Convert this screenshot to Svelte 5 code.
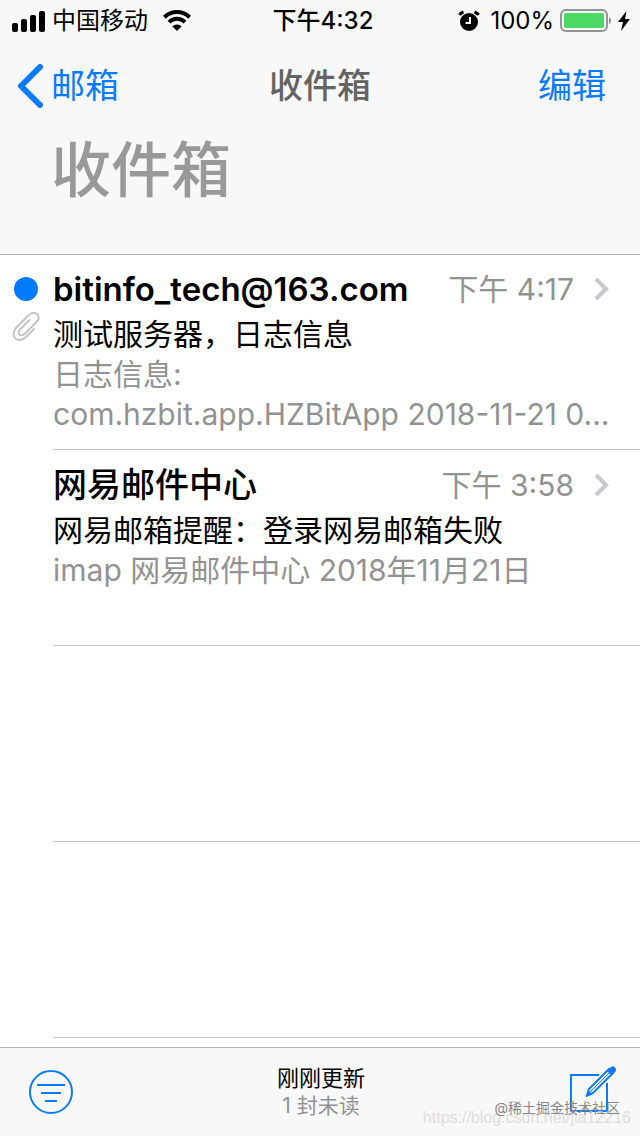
<script lang="ts">
	type Mail = {
		sender: string;
		time: string;
		subject: string;
		preview: string[];
		unread?: boolean;
		attachment?: boolean;
	};

	const mails: Mail[] = [
		{
			sender: 'bitinfo_tech@163.com',
			time: '下午 4:17',
			subject: '测试服务器，日志信息',
			preview: ['日志信息:', 'com.hzbit.app.HZBitApp 2018-11-21 0...'],
			unread: true,
			attachment: true
		},
		{
			sender: '网易邮件中心',
			time: '下午 3:58',
			subject: '网易邮箱提醒：登录网易邮箱失败',
			preview: ['imap 网易邮件中心 2018年11月21日']
		}
	];

	// empty slots below the last mail
	const emptyRows = 2;

	// plain addresses are set heavier than Chinese names
	const isAddress = (sender: string) => sender.includes('@');
</script>

<div class="screen">
	<header class="header">
		<div class="status">
			<div class="status-side">
				<svg class="signal" width="34" height="22" viewBox="0 0 34 22" aria-hidden="true">
					<rect x="0" y="13" width="6" height="9" rx="2" />
					<rect x="9" y="9" width="6" height="13" rx="2" />
					<rect x="18" y="5" width="6" height="17" rx="2" />
					<rect x="27" y="1" width="6" height="21" rx="2" />
				</svg>
				<span>中国移动</span>
				<svg class="wifi" width="30" height="22" viewBox="0 0 30 22" aria-hidden="true">
					<path d="M2.4 7.2a18 18 0 0 1 25.2 0" />
					<path d="M7 12.1a11.4 11.4 0 0 1 16 0" />
					<path class="dot" d="M10.3 16.3a6.8 6.8 0 0 1 9.4 0L15 21Z" />
				</svg>
			</div>
			<span class="clock">下午4:32</span>
			<div class="status-side end">
				<svg width="22" height="22" viewBox="0 0 22 22" aria-hidden="true">
					<circle cx="11" cy="12" r="9" />
					<path class="arc" d="M1.500 5Q2.500 3 5.500 2M20.500 5Q19.500 3 16.500 2" />
					<path class="hand" d="M12 7v6H7.500" />
				</svg>
				<span class="percent">100%</span>
				<svg width="52" height="24" viewBox="0 0 52 24" aria-hidden="true">
					<rect class="shell" x="1" y="1" width="46" height="21" rx="5" />
					<rect class="charge" x="4" y="4" width="40" height="15" rx="2" />
					<path class="cap" d="M49 8a4 4 0 0 1 0 7Z" />
				</svg>
				<svg width="12" height="20" viewBox="0 0 12 20" aria-hidden="true">
					<path d="M8.5 0 0 11h5L3 20l9-12H7Z" />
				</svg>
			</div>
		</div>

		<nav class="nav">
			<button class="nav-button" type="button">
				<svg width="26" height="44" viewBox="0 0 26 44" aria-hidden="true">
					<path d="M23 3 4 22l19 19" />
				</svg>
				<span>邮箱</span>
			</button>
			<span class="nav-title">收件箱</span>
			<button class="nav-button edit" type="button">编辑</button>
		</nav>

		<h1>收件箱</h1>
	</header>

	<main>
		<ul class="mails">
			{#each mails as mail}
				<li>
					<div class="marks">
						{#if mail.unread}
							<span class="unread" role="img" aria-label="未读"></span>
						{/if}
						{#if mail.attachment}
							<svg width="28" height="30" viewBox="0 0 28 30" aria-hidden="true">
								<path
									d="M22 18 14 26c-3 3-7.500 4-10.500 1.500s-2.500-7 .5-10.500L16.500 4.500c2.500-2.500 6-3.500 8.500-1.500s2 5.500-.5 8L13 22.500c-1.500 1.500-4 2.500-5.500 1s-1-3.500.5-5l9.500-9.500"
								/>
							</svg>
						{/if}
					</div>
					<a class="mail" href="#mail">
						<span class="top">
							<strong class:address={isAddress(mail.sender)}>{mail.sender}</strong>
							<time>{mail.time}</time>
							<svg width="16" height="24" viewBox="0 0 16 24" aria-hidden="true">
								<path d="m2 2 10 10L2 22" />
							</svg>
						</span>
						<span class="subject">{mail.subject}</span>
						{#each mail.preview as line}
							<span class="preview">{line}</span>
						{/each}
					</a>
				</li>
			{/each}
			{#each { length: emptyRows } as _}
				<li aria-hidden="true">
					<div class="marks"></div>
					<div class="mail"></div>
				</li>
			{/each}
		</ul>
	</main>

	<footer class="toolbar">
		<button type="button" aria-label="过滤">
			<svg width="46" height="46" viewBox="0 0 46 46" aria-hidden="true">
				<circle cx="23" cy="23" r="21" />
				<path d="M9 16h28M13 24h20M17 32h12" />
			</svg>
		</button>
		<p>
			<span>刚刚更新</span>
			<small>1 封未读</small>
		</p>
		<button type="button" aria-label="写邮件">
			<svg width="48" height="52" viewBox="0 0 48 52" aria-hidden="true">
				<path d="M31 9H3v36h36V17" />
				<path d="M19 29.500 21 23 41 3l4 4-20 20Z" />
				<path d="M22 26 41 7" stroke-width="1" />
				<path class="solid" d="m39 5 4-4q2-1.500 4 .5t.5 4l-4 4ZM18 31l2-7 4.500 4.500Z" />
			</svg>
		</button>
		<span class="watermark url">https://blog.csdn.net/jia12216</span>
		<span class="watermark">@稀土掘金技术社区</span>
	</footer>
</div>

<style>
	:global(body) {
		margin: 0;
	}

	.screen {
		display: flex;
		flex-direction: column;
		height: 100vh;
		overflow: hidden;
		background: #fff;
		color: #000;
		font-family: Inter, 'Noto Sans CJK SC', sans-serif;
		font-size: 30px;
	}

	svg {
		flex: none;
		display: block;
	}

	button {
		padding: 0;
		border: 0;
		background: none;
		color: #0a7aff;
		font: inherit;
		cursor: pointer;
	}

	.header {
		position: relative;
		flex: none;
		height: 254px;
		background: #f8f8f8;
		box-shadow: 0 1px 0 #b2b2b2;
	}

	/* status bar */
	.status {
		display: grid;
		grid-template-columns: 1fr auto 1fr;
		align-items: center;
		height: 42px;
		padding: 0 10px 0 12px;
		font-size: 24px;
		line-height: 42px;
	}

	.status-side {
		display: flex;
		align-items: center;
		gap: 6px;
	}

	.end {
		justify-content: flex-end;
	}

	.clock {
		margin-left: 4px;
		font-weight: 500;
	}

	.percent {
		margin-left: 4px;
	}

	.wifi {
		margin-left: 8px;
		fill: none;
		stroke: #000;
		stroke-width: 4;
	}

	.wifi .dot {
		fill: #000;
		stroke: none;
	}

	.arc {
		fill: none;
		stroke: #000;
		stroke-width: 3;
	}

	.hand {
		fill: none;
		stroke: #f8f8f8;
		stroke-width: 2;
	}

	.shell {
		fill: none;
		stroke: #949494;
		stroke-width: 2;
	}

	.charge {
		fill: #4cd964;
	}

	.cap {
		fill: #949494;
	}

	/* navigation */
	.nav {
		display: grid;
		grid-template-columns: 1fr auto 1fr;
		align-items: center;
		height: 88px;
		padding: 0 17px;
		font-size: 34px;
		line-height: 44px;
	}

	.nav-button {
		display: flex;
		align-items: center;
		gap: 8px;
		justify-self: start;
	}

	.nav-button svg {
		fill: none;
		stroke: currentColor;
		stroke-width: 6;
		stroke-linecap: round;
		stroke-linejoin: round;
	}

	.edit {
		justify-self: end;
		margin-right: 17px;
	}

	.nav-title {
		color: #646464;
		font-weight: 500;
	}

	h1 {
		margin: 0;
		padding: 0 51px;
		color: #999;
		font-size: 60px;
		font-weight: 500;
		line-height: 80px;
	}

	/* mail list */
	main {
		flex: 1;
		min-height: 0;
		overflow: hidden;
	}

	.mails {
		margin: 0;
		padding: 0;
		list-style: none;
	}

	li {
		display: flex;
	}

	.marks {
		display: flex;
		flex-direction: column;
		align-items: center;
		flex: none;
		gap: 10px;
		box-sizing: border-box;
		width: 53px;
		padding: 23px 1px 0 0;
	}

	.unread {
		width: 24px;
		height: 24px;
		border-radius: 50%;
		background: #007aff;
	}

	.marks svg {
		fill: none;
		stroke: #c4c4c4;
		stroke-width: 2;
		stroke-linecap: round;
	}

	.mail {
		display: flex;
		flex-direction: column;
		flex: 1;
		min-width: 0;
		box-sizing: border-box;
		height: 196px;
		padding: 12px 30px 0 0;
		border-bottom: 1px solid #c8c7cc;
		color: #000;
		line-height: 40px;
		text-decoration: none;
	}

	.top {
		display: flex;
		align-items: center;
		margin-bottom: 2px;
		line-height: 46px;
	}

	.top svg {
		margin-left: 20px;
		fill: none;
		stroke: #c7c7cc;
		stroke-width: 4;
	}

	strong {
		flex: 1;
		overflow: hidden;
		font-size: 34px;
		font-weight: 500;
		text-overflow: ellipsis;
		white-space: nowrap;
	}

	.address {
		font-size: 33px;
		font-weight: 600;
	}

	time,
	.preview {
		color: #929292;
	}

	.subject,
	.preview {
		overflow: hidden;
		white-space: nowrap;
	}

	.preview {
		text-overflow: ellipsis;
	}

	/* bottom bar */
	.toolbar {
		position: relative;
		display: flex;
		align-items: center;
		justify-content: space-between;
		flex: none;
		box-sizing: border-box;
		height: 88px;
		padding: 0 24px 0 28px;
		background: #f8f8f8;
		box-shadow: 0 -1px 0 #b2b2b2;
	}

	.toolbar svg {
		fill: none;
		stroke: #0a7aff;
		stroke-width: 2;
	}

	.toolbar .solid {
		fill: #0a7aff;
		stroke: none;
	}

	.toolbar p {
		display: flex;
		flex-direction: column;
		align-items: center;
		margin: 0;
		font-size: 22px;
		line-height: 27px;
	}

	small {
		color: #929292;
		font-size: 21px;
	}

	.watermark {
		position: absolute;
		right: 20px;
		bottom: 18px;
		color: #888;
		font-size: 14px;
		line-height: 20px;
		white-space: nowrap;
	}

	.url {
		right: 9px;
		bottom: 8px;
		color: #dedede;
		font-family: 'Liberation Sans', sans-serif;
		font-size: 16px;
	}
</style>
